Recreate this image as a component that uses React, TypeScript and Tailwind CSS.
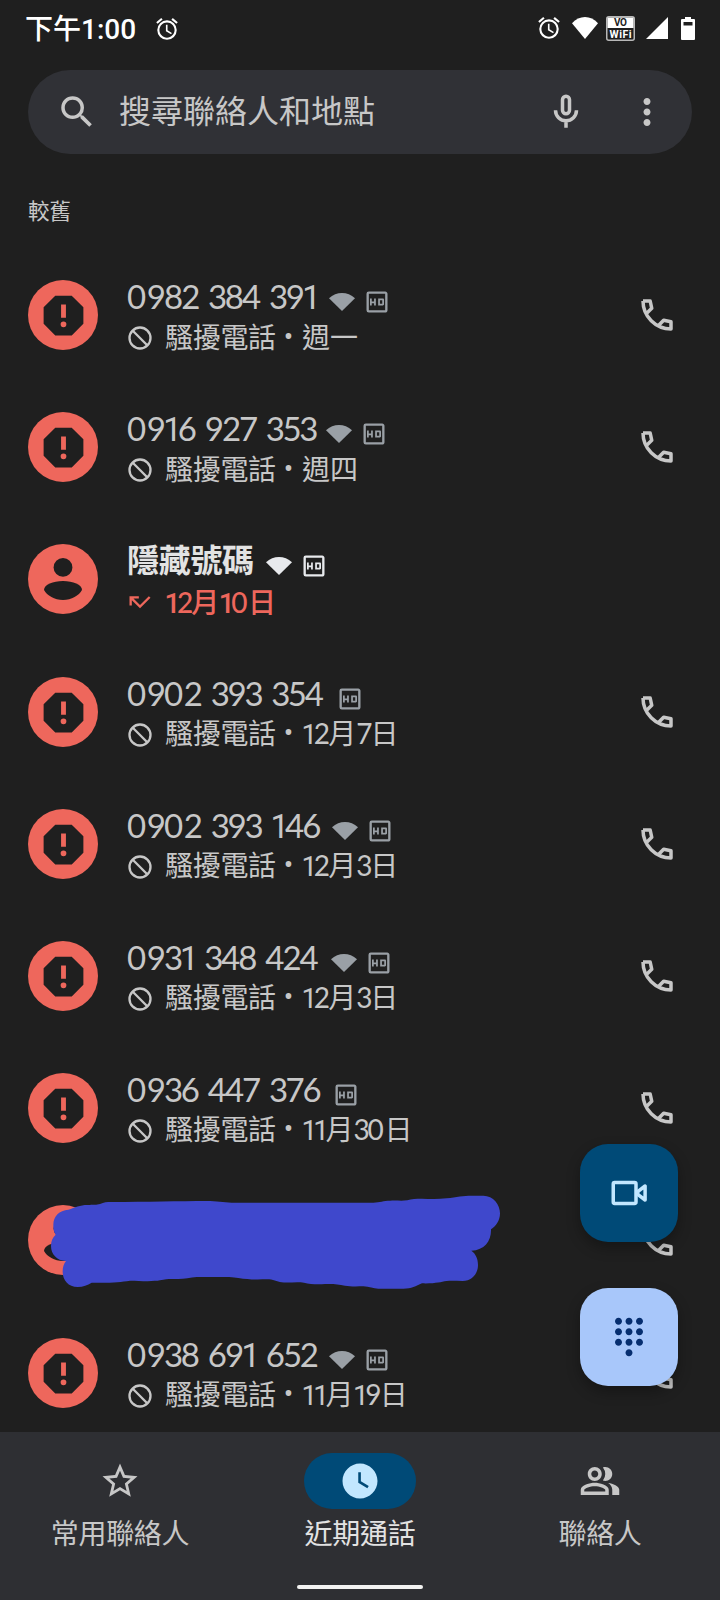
import type { ReactNode } from 'react';
import {
  MdCallMissed,
  MdDialpad,
  MdMoreVert,
  MdOutlineAlarm,
  MdOutlineHd,
  MdOutlinePeopleAlt,
  MdSearch,
  MdStarBorder,
  MdWatchLater,
} from 'react-icons/md';

type Call = {
  name: string;
  nameClass: string;
  date: string;
  wifi?: boolean;
  hidden?: boolean;
  tall?: boolean;
  redacted?: boolean;
};

const calls: Call[] = [
  { name: '0982 384 391', nameClass: 'w-[202px]', date: '週一', wifi: true },
  { name: '0916 927 353', nameClass: 'w-[199px]', date: '週四', wifi: true },
  { name: '隱藏號碼', nameClass: 'w-[139px]', date: '12月10日', wifi: true, hidden: true, tall: true },
  { name: '0902 393 354', nameClass: 'w-[209px]', date: '12月7日' },
  { name: '0902 393 146', nameClass: 'w-[205px]', date: '12月3日', wifi: true },
  { name: '0931 348 424', nameClass: 'w-[204px]', date: '12月3日', wifi: true },
  { name: '0936 447 376', nameClass: 'w-[205px]', date: '11月30日' },
  { name: '', nameClass: '', date: '', tall: true, redacted: true },
  { name: '0938 691 652', nameClass: 'w-[202px]', date: '11月19日', wifi: true },
];

// Proportional spacing for figures, in em.
const kerning: Record<string, number> = {
  '0': 0.02,
  '2': -0.065,
  '3': -0.075,
  '4': -0.06,
  '5': -0.07,
  '6': -0.06,
  '7': -0.07,
  '8': -0.06,
  '9': -0.06,
  ' ': 0.045,
};

function Figures({ text }: { text: string }) {
  return (
    <>
      {Array.from(text).map((ch, i) => {
        if (ch === '1') {
          return (
            <span key={i} className="-ml-[0.02em] font-['Roboto'] tracking-[-0.125em]">
              1
            </span>
          );
        }
        if (ch in kerning) {
          return (
            <span key={i} className="font-['Lato']" style={{ letterSpacing: `${kerning[ch]}em` }}>
              {ch}
            </span>
          );
        }
        return ch;
      })}
    </>
  );
}

function Wifi({ className }: { className: string }) {
  return (
    <svg viewBox="0 0 26 18" className={className} fill="currentColor" preserveAspectRatio="none">
      <path d="M0 5.2C7.4-1.7 18.6-1.7 26 5.2L13 18Z" />
    </svg>
  );
}

function Mic({ className }: { className: string }) {
  return (
    <svg viewBox="0 0 24 24" className={className} fill="none" stroke="currentColor" strokeWidth="2">
      <rect x="10" y="3" width="4" height="10" rx="2" />
      <path d="M6 11A6 6 0 0 0 18 11M12 17V21" />
    </svg>
  );
}

function Block({ className }: { className: string }) {
  return (
    <svg viewBox="0 0 24 24" className={className} fill="none" stroke="currentColor" strokeWidth="2">
      <circle cx="12" cy="12" r="9" />
      <path d="M5.6 5.6L18.4 18.4" />
    </svg>
  );
}

function Report({ className }: { className: string }) {
  return (
    <svg viewBox="0 0 24 24" className={className} fill="currentColor">
      <path
        fillRule="evenodd"
        d="M15.73 3H8.27L3 8.27V15.73L8.27 21H15.73L21 15.73V8.27ZM10.9 7V13H13.1V7ZM12 14.7A1.3 1.3 0 0 0 12 17.3A1.3 1.3 0 0 0 12 14.7Z"
      />
    </svg>
  );
}

function Phone() {
  return (
    <svg viewBox="0 0 24 24" className="size-[42px] shrink-0 text-[#c7c7c7]" fill="none" stroke="currentColor" strokeWidth="2" strokeLinejoin="round">
      <path d="M4 4H8.1L9 8.2L6.1 11M4 4C4 12.8 11.2 20 20 20V15.9L15.8 15L13 17.9" />
    </svg>
  );
}

function Avatar({ person }: { person: boolean }) {
  return (
    <div className="flex size-[70px] shrink-0 items-center justify-center rounded-full bg-[#ee675c] text-[#1f1f1f]">
      {person ? (
        <svg viewBox="0 0 70 70" className="size-[70px]" fill="currentColor">
          <circle cx="35" cy="23.4" r="9.4" />
          <path d="M16 46C16 40.5 25 37 35 37S54 40.5 54 46C51 51.5 43.5 56 35 56S19 51.5 16 46Z" />
        </svg>
      ) : (
        <Report className="size-[53px]" />
      )}
    </div>
  );
}

function CallRow({ call }: { call: Call }) {
  const { hidden, redacted } = call;
  return (
    <li className={`flex shrink-0 items-center pl-7 pr-[42px] ${call.tall ? 'h-[133px] pb-px' : 'h-[132px]'}`}>
      <Avatar person={Boolean(hidden || redacted)} />
      <div className="ml-[28px] flex h-[86px] flex-1 flex-col pt-[5px]">
        {!redacted && (
          <>
            <div className={`ml-px flex h-10 items-center ${hidden ? 'text-[#e8eaed]' : 'text-[#9aa0a6]'}`}>
              <span
                className={`shrink-0 whitespace-nowrap ${call.nameClass} ${
                  hidden ? 'mb-[7px] text-[32px] font-bold leading-[40px] tracking-[-0.3px] text-[#e3e3e3]' : "font-['Lato'] text-[33px] text-[#c7c7c7]"
                }`}
              >
                <Figures text={call.name} />
              </span>
              {call.wifi && <Wifi className="mr-2 mt-[10px] h-[18px] w-[26px]" />}
              <MdOutlineHd className="mt-[10px] size-7" />
            </div>
            <div className={`flex h-[41px] items-center text-[28px] leading-[41px] ${hidden ? 'text-[#ee675c]' : 'text-[#c7c7c7]'}`}>
              {hidden ? <MdCallMissed className="mr-[11px] size-7" /> : <Block className="mr-[11px] size-7" />}
              <div className={`flex whitespace-pre ${hidden ? 'mt-px font-medium' : '-mt-[2px]'}`}>
                {!hidden && (
                  <>
                    <span className="w-[110px] tracking-[-0.3px]">騷擾電話</span>
                    <span className="w-[27px] text-center font-['Roboto']"> • </span>
                  </>
                )}
                <span>
                  <Figures text={call.date} />
                </span>
              </div>
            </div>
          </>
        )}
      </div>
      {!hidden && <Phone />}
    </li>
  );
}

function Tab({ label, active, children }: { label: string; active?: boolean; children: ReactNode }) {
  return (
    <div className={`flex flex-1 flex-col items-center pt-[21px] ${active ? 'text-[#e3e3e3]' : 'text-[#c7c7c7]'}`}>
      <div className={`flex h-14 w-28 items-center justify-center rounded-full ${active ? 'bg-[#004a77] text-[#c2e7ff]' : ''}`}>{children}</div>
      <span className="mt-[3px] text-[28px] leading-[40px] tracking-[-0.3px]">{label}</span>
    </div>
  );
}

export default function App() {
  return (
    <div className="relative flex h-[1600px] w-[720px] flex-col overflow-hidden bg-[#1f1f1f] font-['Noto_Sans_CJK_TC',sans-serif] text-[#c7c7c7]">
      <header className="flex h-[70px] shrink-0 items-start pl-[25px] pr-[25px] pt-[16px] text-white">
        <span className="mt-px font-['Roboto','Noto_Sans_CJK_TC',sans-serif] text-[28px] font-medium leading-[26px]">下午1:00</span>
        <MdOutlineAlarm className="ml-[18px] size-[26px]" />
        <div className="ml-auto flex h-[24px] items-center">
          <MdOutlineAlarm className="mr-[10px] size-[26px]" />
          <Wifi className="mr-2 h-[22px] w-[26px]" />
          <svg viewBox="0 0 29 25" className="mr-[11px] h-[25px] w-[29px]">
            <rect x="0.75" y="0.75" width="27.5" height="23.5" rx="2" fill="#1f1f1f" stroke="#b8b8b8" strokeWidth="1.5" />
            <path d="M1.5 1.5H27.5V12H1.5Z" fill="#fff" />
            <text x="14.5" y="10.3" textAnchor="middle" fontFamily="Roboto" fontWeight="700" fontSize="10" fill="#1f1f1f" textLength="13">VO</text>
            <text x="14.5" y="21.8" textAnchor="middle" fontFamily="Roboto" fontWeight="700" fontSize="10.5" fill="#fff" textLength="22">WiFi</text>
          </svg>
          <svg viewBox="0 0 22 22" className="mr-[13px] size-[22px]" fill="currentColor">
            <path d="M22 0V22H0Z" />
          </svg>
          <svg viewBox="0 0 14 23" className="h-[23px] w-[14px]" fill="currentColor">
            <path fillRule="evenodd" d="M4 0H10V2H13Q14 2 14 3V22Q14 23 13 23H1Q0 23 0 22V3Q0 2 1 2H4ZM2.5 5V8.5H11.5V5Z" />
          </svg>
        </div>
      </header>

      <div className="mx-7 flex h-[84px] shrink-0 items-center rounded-full bg-[#303136] pl-7 pr-6">
        <MdSearch className="size-[42px]" />
        <span className="mb-[7px] ml-[21px] text-[32px] leading-none">搜尋聯絡人和地點</span>
        <Mic className="ml-auto size-[42px]" />
        <MdMoreVert className="ml-[39px] size-[42px]" />
      </div>

      <h2 className="h-[95px] shrink-0 pl-7 pt-[40px] text-[21.5px] leading-[32px]">較舊</h2>

      <ul className="flex min-h-0 flex-1 flex-col overflow-hidden">
        {calls.map((call, i) => (
          <CallRow key={i} call={call} />
        ))}
      </ul>

      <nav className="flex h-[168px] shrink-0 flex-col bg-[#2e2f33]">
        <div className="flex h-[153px]">
          <Tab label="常用聯絡人">
            <MdStarBorder className="size-[42px]" />
          </Tab>
          <Tab label="近期通話" active>
            <MdWatchLater className="size-[42px]" />
          </Tab>
          <Tab label="聯絡人">
            <MdOutlinePeopleAlt className="size-[42px]" />
          </Tab>
        </div>
        <div className="mx-auto h-1 w-[126px] rounded-full bg-[#f2f2f2]" />
      </nav>

      <svg viewBox="0 0 1560 390" className="absolute left-0 top-[1170px] h-[130px] w-[520px]" fill="#3f48cc">
        <path d="M160 165C160 138 178 121 205 119C225 113 240 105 262 105C280 104 290 105 300 102C312 97 320 96 335 96C440 96 540 93 620 93C650 93 670 97 695 98H1120C1140 97 1150 92 1170 92C1190 91 1205 93 1222 91C1235 86 1248 86 1265 86C1290 87 1315 88 1340 85C1370 81 1390 77 1415 77H1450C1480 77 1500 104 1500 130C1500 152 1488 168 1473 178C1474 212 1454 240 1414 242C1427 251 1434 266 1434 285C1434 312 1415 333 1388 333C1370 333 1355 332 1340 333C1320 336 1308 341 1266 340C1247 349 1235 356 1210 356H1135C1120 356 1108 350 1090 349C1070 349 1050 350 1035 347C1015 343 1000 341 975 342C950 344 930 342 912 338C890 334 870 339 845 337C830 335 820 328 800 328C770 329 745 329 715 324C690 320 665 321 590 321C570 322 550 328 530 327C510 327 500 326 480 331C460 335 420 333 390 332C360 336 340 339 275 338C262 345 250 351 233 351C205 351 188 330 188 305C188 292 191 282 198 273C170 272 153 252 153 228C153 212 158 202 167 194C161 186 160 176 160 165Z" />
      </svg>

      <div className="absolute right-[42px] top-[1144px] flex flex-col gap-[46px]">
        <button className="flex size-[98px] items-center justify-center rounded-[28px] bg-[#004a77] text-[#c2e7ff] shadow-[0_6px_14px_rgba(0,0,0,0.3)]">
          <svg viewBox="0 0 24 24" className="size-[42px]" fill="none" stroke="currentColor" strokeWidth="2" strokeLinejoin="round">
            <rect x="3" y="6" width="13" height="12" rx="0.8" />
            <path d="M21.2 8V16L17 12.8V11.2Z" />
          </svg>
        </button>
        <button className="flex size-[98px] items-center justify-center rounded-[28px] bg-[#a8c7fa] text-[#062e6f] shadow-[0_6px_14px_rgba(0,0,0,0.3)]">
          <MdDialpad className="size-[42px]" />
        </button>
      </div>
    </div>
  );
}
